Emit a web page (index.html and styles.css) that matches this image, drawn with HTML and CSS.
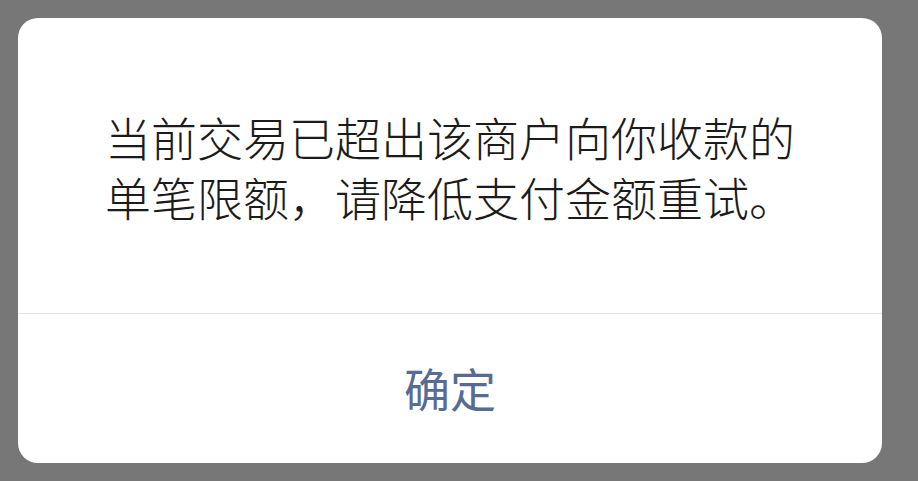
FILE: index.html
```html
<!DOCTYPE html>
<html lang="zh-CN">
<head>
    <meta charset="UTF-8">
    <meta name="viewport" content="width=device-width, initial-scale=1.0">
    <title>提示</title>
    <link rel="stylesheet" href="styles.css">
</head>
<body>
    <div class="dialog">
        <div class="dialog-body">
            <p class="dialog-text">当前交易已超出该商户向你收款的单笔限额，请降低支付金额重试。</p>
        </div>
        <div class="dialog-footer">
            <button class="dialog-btn">确定</button>
        </div>
    </div>
</body>
</html>
```

FILE: styles.css
```css
body {
    font-family: "Noto Sans CJK SC", "Noto Sans", sans-serif;
    background-color: #777777;
    margin: 0;
    padding: 18px;
    height: 100vh;
    box-sizing: border-box;
}
.dialog {
    background: white;
    width: 864px;
    height: 445px;
    border-radius: 20px;
    display: flex;
    flex-direction: column;
    overflow: hidden;
}
.dialog-body {
    height: 295px;
    display: flex;
    align-items: center;
    justify-content: center;
    padding: 0 70px;
    border-bottom: 1px solid #e5e5e5;
}
.dialog-text {
    margin: 0;
    color: #1b1b1b;
    font-size: 46px;
    font-weight: 300;
    line-height: 60px;
    text-align: center;
}
.dialog-footer {
    flex: 1;
    display: flex;
}
.dialog-btn {
    flex: 1;
    background: none;
    border: none;
    font-family: inherit;
    font-size: 46px;
    color: #576b95;
    cursor: pointer;
    padding: 0 0 4px;
}
```
